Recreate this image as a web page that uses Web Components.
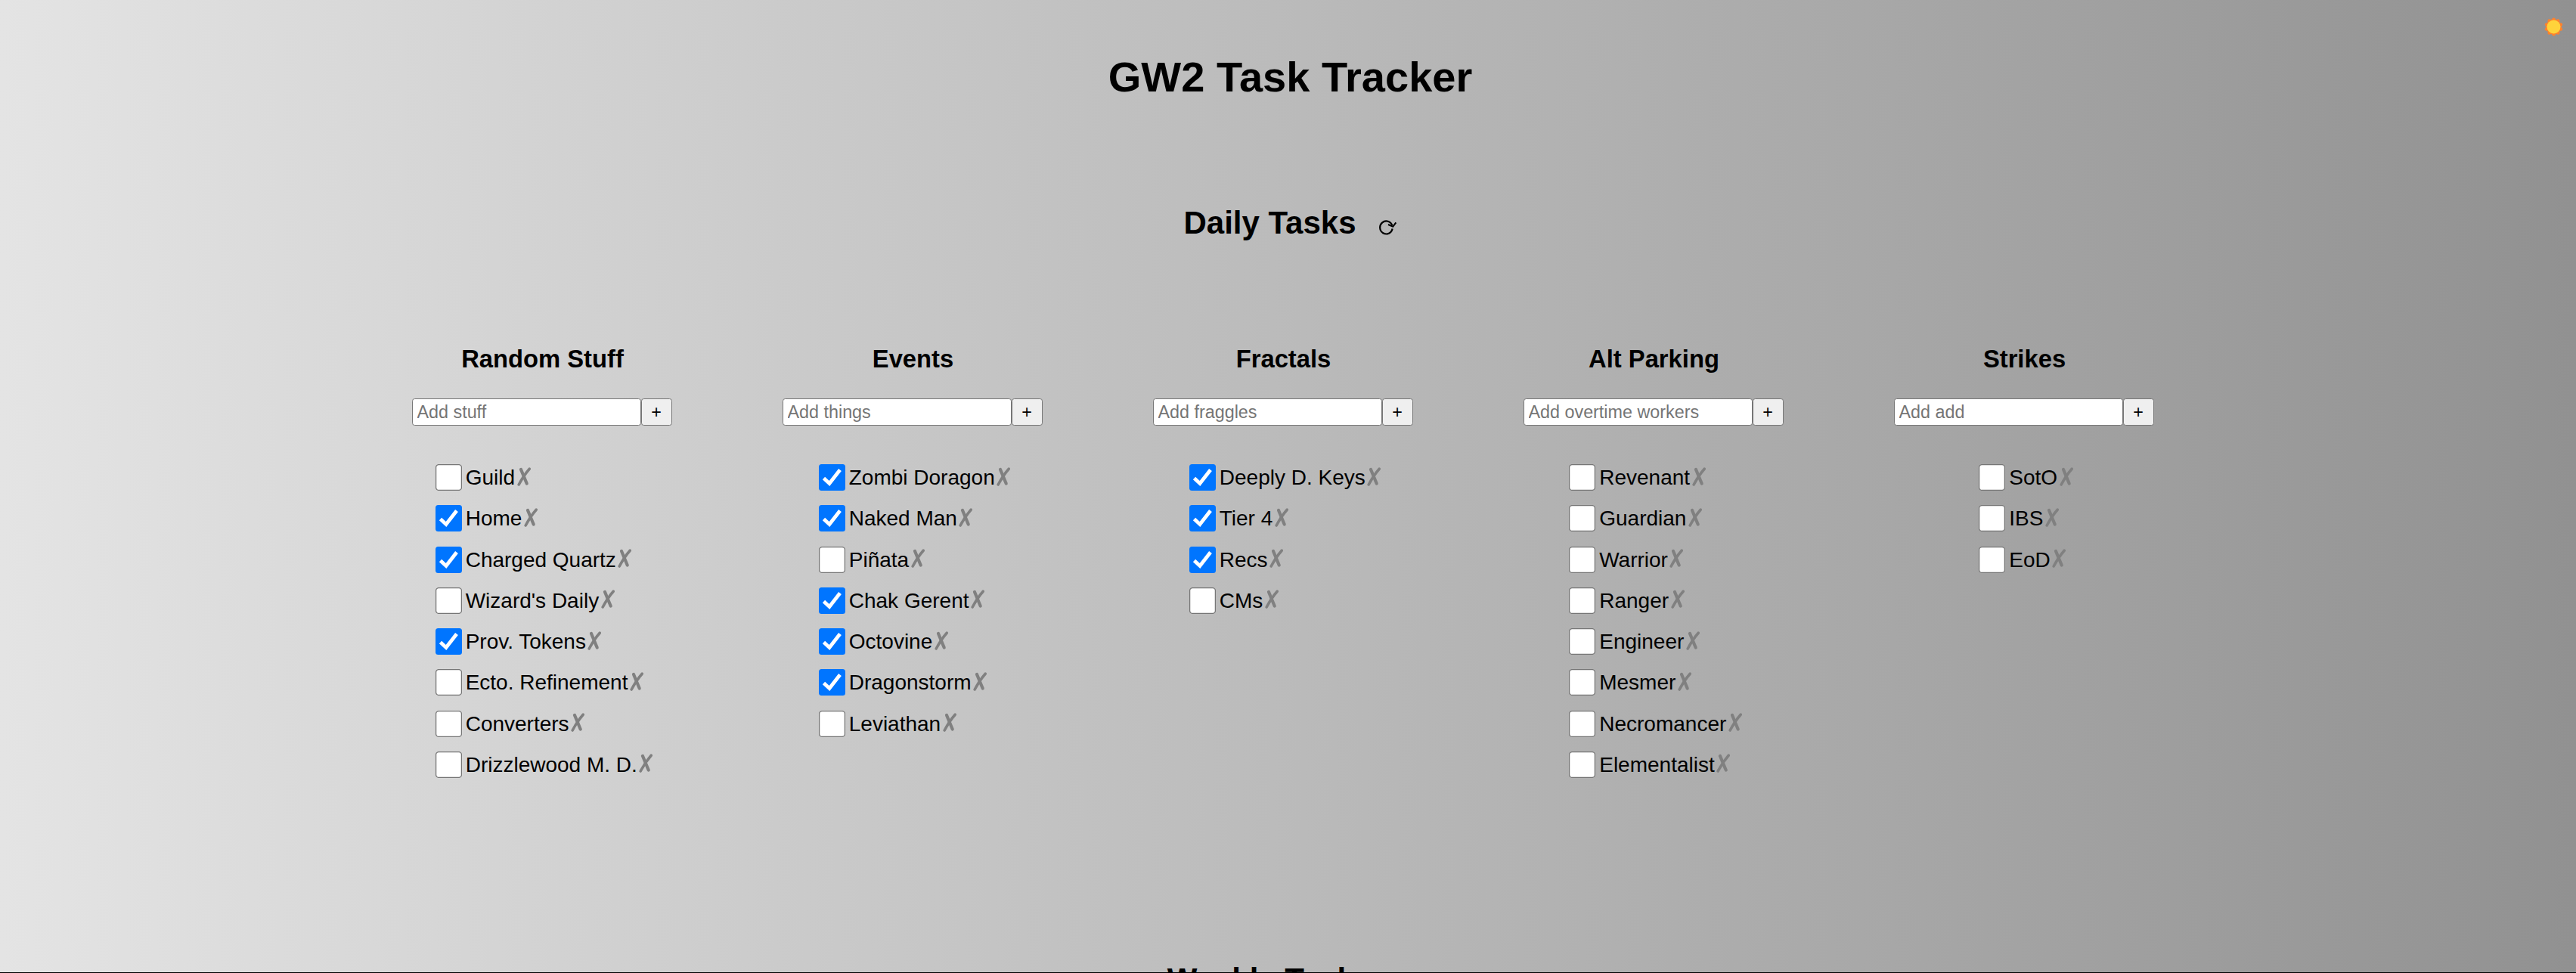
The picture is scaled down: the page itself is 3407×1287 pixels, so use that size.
<!DOCTYPE html>
<html lang="en">
<head>
<meta charset="utf-8">
<title>GW2 Task Tracker</title>
<style>
html{height:1287px;overflow:hidden}
body{margin:0;height:1287px;overflow:hidden;font-family:"Liberation Sans",Arial,sans-serif;color:#000}
</style>
</head>
<body>
<task-tracker></task-tracker>
<script>
class TaskItem extends HTMLElement{
  connectedCallback(){
    const r=this.attachShadow({mode:'open'});
    r.innerHTML=`<style>
:host{display:flex;align-items:flex-start;height:54.25px;font-size:28px;line-height:35px;white-space:nowrap}
.box{box-sizing:border-box;width:35px;height:35px;margin-right:5px;flex:none;display:block}
.x{width:18px;height:25px;margin:3.500px 3px 0 2.5px;flex:none}
</style>
<svg class="box" viewBox="0 0 35 35">${this.hasAttribute('done')
?'<rect width="35" height="35" rx="3.5" fill="#0075ff"/><path d="M6.500 18.500 L14 25.500 L28 7.500" fill="none" stroke="#fff" stroke-width="4.8"/>'
:'<rect x=".6" y=".6" width="33.8" height="33.8" rx="3.6" fill="#fff" stroke="#767676" stroke-width="1.3"/>'}</svg>
<span><slot></slot></span>
<svg class="x" viewBox="0 0 18 25"><path d="M5 3 L12.700 21.500" fill="none" stroke="#808080" stroke-width="4.2" stroke-linecap="round"/><path d="M16.200 2.200 Q8.500 11 2.200 23" fill="none" stroke="#808080" stroke-width="3.600" stroke-linecap="round"/></svg>`;
  }
}
customElements.define('task-item',TaskItem);

class TaskColumn extends HTMLElement{
  connectedCallback(){
    const r=this.attachShadow({mode:'open'});
    r.innerHTML=`<style>
:host{display:flex;flex-direction:column;align-items:center;width:490px}
h3{margin:0;font-size:32.76px;line-height:38px;height:71px}
form{display:flex;margin:0 2px 51px 0}
input,button{box-sizing:border-box;height:36px;border:1px solid #767676;border-radius:3.5px;font:23.333px "Liberation Sans",Arial,sans-serif;margin:0}
input{width:303px;padding:0 6px;background:#fff}
input::placeholder{color:#757575;opacity:1}
button{width:41px;padding:0;background:#efefef;color:#000;line-height:32px}
.list{display:flex;flex-direction:column;padding-left:7px}
</style><h3>${this.getAttribute('heading')}</h3>
<form><input placeholder="${this.getAttribute('hint')}"><button type="button">+</button></form>
<div class="list"><slot></slot></div>`;
  }
}
customElements.define('task-column',TaskColumn);

class SectionTitle extends HTMLElement{
  connectedCallback(){
    const r=this.attachShadow({mode:'open'});
    r.innerHTML=`<style>
:host{display:flex;justify-content:center;height:48px}
h2{margin:0;font-size:42px;line-height:48px}
svg{width:24px;height:22px;margin:20px 0 0 30px}
</style><h2><slot></slot></h2>
<svg viewBox="0 0 24 22"><path d="M17.300 7.200 A8.300 8.500 0 1 0 17.600 11.500" fill="none" stroke="#000" stroke-width="2.2"/><path d="M12 6 L18.300 8.600 L22.300 3.400" fill="none" stroke="#000" stroke-width="2.1"/></svg>`;
  }
}
customElements.define('section-title',SectionTitle);

const columns=[
['Random Stuff','Add stuff',['Guild','*Home','*Charged Quartz',"Wizard's Daily",'*Prov. Tokens','Ecto. Refinement','Converters','Drizzlewood M. D.']],
['Events','Add things',['*Zombi Doragon','*Naked Man','Piñata','*Chak Gerent','*Octovine','*Dragonstorm','Leviathan']],
['Fractals','Add fraggles',['*Deeply D. Keys','*Tier 4','*Recs','CMs']],
['Alt Parking','Add overtime workers',['Revenant','Guardian','Warrior','Ranger','Engineer','Mesmer','Necromancer','Elementalist']],
['Strikes','Add add',['SotO','IBS','EoD']]];

class TaskTracker extends HTMLElement{
  connectedCallback(){
    const r=this.attachShadow({mode:'open'});
    r.innerHTML=`<style>
:host{display:flex;flex-direction:column;box-sizing:border-box;position:relative;height:1287px;overflow:hidden;border-bottom:1px solid #000;background:linear-gradient(90deg,#e4e4e4,#919191)}
h1{margin:70px 0 0;padding-left:6px;text-align:center;font-size:56px;line-height:64px;flex:none}
section-title{flex:none;padding-left:6px}
.daily{margin-top:137px}
.weekly{margin-top:24px}
.cols{display:flex;justify-content:center;padding-right:12px;margin-top:137px;height:792px;flex:none}
.sun{position:absolute;right:17px;top:23px;width:25px;height:25px}
</style>
<h1>GW2 Task Tracker</h1>
<section-title class="daily">Daily Tasks</section-title>
<div class="cols">${columns.map(([h,p,l])=>`<task-column heading="${h}" hint="${p}">${l.map(t=>t[0]==='*'?`<task-item done>${t.slice(1)}</task-item>`:`<task-item>${t}</task-item>`).join('')}</task-column>`).join('')}</div>
<section-title class="weekly">Weekly Tasks</section-title>
<svg class="sun" viewBox="0 0 25 25"><g fill="#ff822d"><circle cx="12.500" cy="12.500" r="10.300"/>${[...Array(10)].map((_,i)=>`<circle cx="${12.5+9.8*Math.sin(i*Math.PI/5)}" cy="${12.5-9.8*Math.cos(i*Math.PI/5)}" r="2.300"/>`).join('')}</g><circle cx="12.500" cy="12.500" r="9" fill="#ffd33b"/></svg>`;
  }
}
customElements.define('task-tracker',TaskTracker);
</script>
</body>
</html>
